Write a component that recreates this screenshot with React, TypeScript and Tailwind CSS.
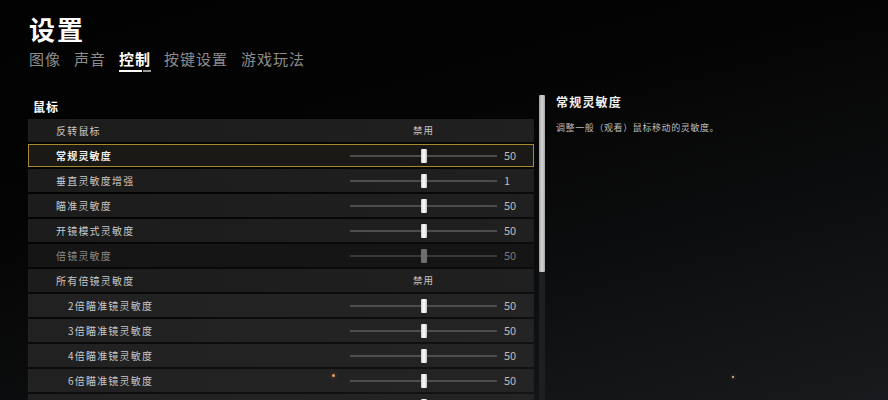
import React from "react";

type Row = {
  label: string;
  kind: "slider" | "toggle";
  value?: string;
  pos?: number;
  sub?: boolean;
  selected?: boolean;
  disabled?: boolean;
};

const rows: Row[] = [
  { label: "反转鼠标", kind: "toggle", value: "禁用" },
  { label: "常规灵敏度", kind: "slider", value: "50", pos: 0.5, selected: true },
  { label: "垂直灵敏度增强", kind: "slider", value: "1", pos: 0.5 },
  { label: "瞄准灵敏度", kind: "slider", value: "50", pos: 0.5 },
  { label: "开镜模式灵敏度", kind: "slider", value: "50", pos: 0.5 },
  { label: "倍镜灵敏度", kind: "slider", value: "50", pos: 0.5, disabled: true },
  { label: "所有倍镜灵敏度", kind: "toggle", value: "禁用" },
  { label: "2倍瞄准镜灵敏度", kind: "slider", value: "50", pos: 0.5, sub: true },
  { label: "3倍瞄准镜灵敏度", kind: "slider", value: "50", pos: 0.5, sub: true },
  { label: "4倍瞄准镜灵敏度", kind: "slider", value: "50", pos: 0.5, sub: true },
  { label: "6倍瞄准镜灵敏度", kind: "slider", value: "50", pos: 0.5, sub: true },
  { label: "8倍瞄准镜灵敏度", kind: "slider", value: "50", pos: 0.5, sub: true },
];

const tabs = ["图像", "声音", "控制", "按键设置", "游戏玩法"];

function Slider({ pos, disabled }: { pos: number; disabled?: boolean }) {
  return (
    <div className="relative h-[21px] w-[147px]">
      <div
        className={
          "absolute left-0 right-0 top-[10px] h-[2px] " +
          (disabled ? "bg-[#3a3a3a]" : "bg-[#4d4d4d]")
        }
      />
      <div
        className={
          "absolute top-[4px] h-[14px] w-[6px] rounded-[1px] " +
          (disabled
            ? "bg-[#6e6e6e]"
            : "bg-[linear-gradient(90deg,#cfcfcf,#ffffff_50%,#c4c4c4)]")
        }
        style={{ left: `calc(${pos * 100}% - 3px)` }}
      />
    </div>
  );
}

function SettingRow({ row }: { row: Row }) {
  const bg = row.selected
    ? "bg-[#1b1915] border border-[#a8892c]"
    : row.disabled
    ? "bg-[#151515] border border-transparent"
    : row.sub
    ? "bg-[linear-gradient(90deg,#212121,#242424)] border border-transparent"
    : "bg-[linear-gradient(90deg,#1c1c1c,#202020)] border border-transparent";
  const labelColor = row.disabled
    ? "text-[#8d8d8d]"
    : row.selected
    ? "text-[#f2f2f2]"
    : "text-[#c9c9c9]";
  return (
    <div className={"flex h-[23px] shrink-0 items-center " + bg}>
      <div
        className={
          "w-[321px] shrink-0 text-[10px] leading-[21px] tracking-[1.2px] " +
          labelColor +
          (row.sub ? " pl-[39px]" : " pl-[27px]") +
          (row.selected ? " font-bold" : "")
        }
      >
        {row.label}
      </div>
      {row.kind === "slider" ? (
        <>
          <Slider pos={row.pos ?? 0.5} disabled={row.disabled} />
          <div
            className={
              "ml-[7px] text-[11px] leading-[21px] " +
              (row.disabled ? "text-[#7a7a7a]" : "text-[#bdbdbd]")
            }
          >
            {row.value}
          </div>
        </>
      ) : (
        <div className="w-[147px] text-center text-[9.5px] leading-[21px] tracking-[1px] text-[#c4c4c4]">
          {row.value}
        </div>
      )}
    </div>
  );
}

export default function App() {
  return (
    <div
      className="relative h-[400px] w-[888px] overflow-hidden bg-[linear-gradient(165deg,#020202_0%,#040404_35%,#0c0d0e_65%,#181a1d_100%)] text-white"
      style={{ fontFamily: '"Noto Sans CJK SC", "Noto Sans", sans-serif' }}
    >
      {/* header */}
      <div className="pl-[29px] pt-[12px]">
        <div className="h-[34px] text-[26px] font-bold leading-[34px] tracking-[2px] text-white">
          设置
        </div>
        <div className="mt-[3px] flex gap-[13px]">
          {tabs.map((t) => (
            <div key={t} className="flex flex-col">
              <div
                className={
                  "text-[15px] leading-[20px] tracking-[1px] " +
                  (t === "控制" ? "font-bold text-white" : "text-[#8c8c8c]")
                }
              >
                {t}
              </div>
              <div className="mt-[1px] flex h-[2px]">
                {t === "控制" && (
                  <>
                    <div className="h-[2px] w-[23px] bg-white" />
                    <div className="ml-[1px] h-[2px] w-[8px] bg-[#9a9a9a]" />
                  </>
                )}
              </div>
            </div>
          ))}
        </div>
      </div>

      {/* body */}
      <div className="mt-[22px] flex">
        <div className="ml-[28px] flex w-[506px] flex-col">
          <div className="pl-[5px] pt-[5px] text-[12px] font-bold leading-[16px] tracking-[1px] text-white">
            鼠标
          </div>
          <div className="mt-[4px] flex flex-col gap-[2px]">
            {rows.map((r) => (
              <SettingRow key={r.label} row={r} />
            ))}
          </div>
        </div>

        {/* scrollbar */}
        <div className="ml-[5px] mt-[1px] flex w-[6px] flex-col">
          <div className="h-[177px] rounded-[1px] bg-[linear-gradient(90deg,#9c9c9c,#d6d6d6_50%,#a4a4a4)]" />
          <div className="h-[200px] bg-[#1e1f21]" />
        </div>

        {/* description */}
        <div className="ml-[11px] flex flex-col">
          <div className="text-[12px] font-bold leading-[16px] tracking-[1.2px] text-[#f0f0f0]">
            常规灵敏度
          </div>
          <div className="mt-[12px] text-[9px] leading-[12px] tracking-[0.6px] text-[#bdbdbd]">
            调整一般（观看）鼠标移动的灵敏度。
          </div>
        </div>
      </div>

      {/* embers */}
      <div className="absolute left-[332px] top-[374px] h-[3px] w-[3px] rounded-full bg-[#e0a070] shadow-[0_0_4px_#c0502a]" />
      <div className="absolute left-[732px] top-[376px] h-[2px] w-[2px] rounded-full bg-[#f0c090] shadow-[0_0_3px_#d07040]" />
    </div>
  );
}
